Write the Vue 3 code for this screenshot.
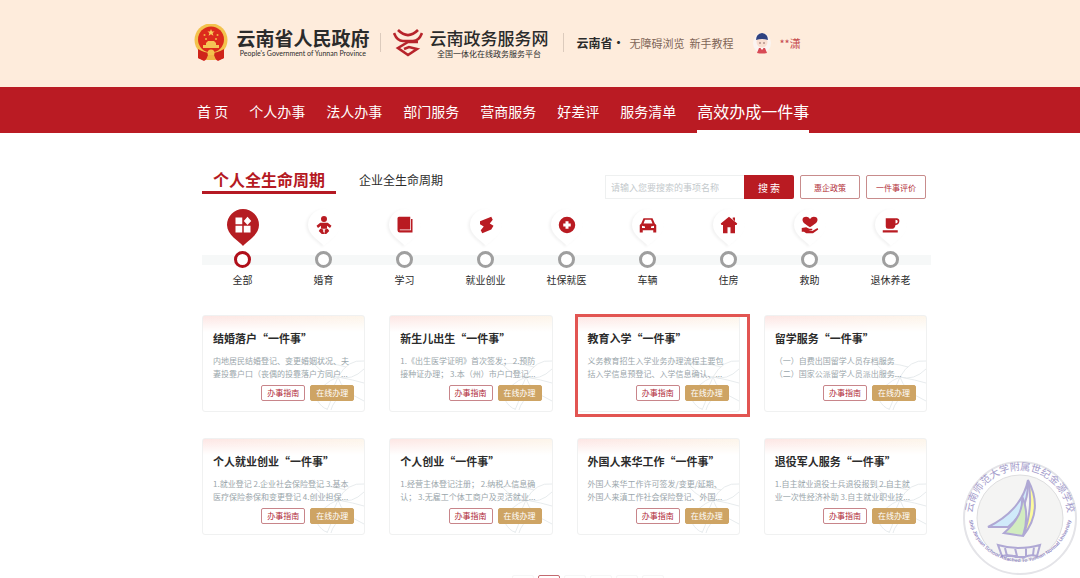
<template>
  <div class="page">
    <header class="header">
      <a class="brand" href="#">
        <svg class="brand__emblem" viewBox="0 0 34 37" aria-hidden="true">
          <path d="M5 25h24l1 9-6 3-3-2h-8l-3 2-6-3z" fill="#d3261c" />
          <circle cx="17" cy="16" r="16.500" fill="#f3c24c" />
          <circle cx="17" cy="15.500" r="13" fill="#dc2a1c" />
          <path d="M17 5l1 2.500h2.600l-2 1.600.8 2.600-2.400-1.500-2.400 1.500.8-2.600-2-1.600H16z" fill="#f8cf5a" />
          <circle cx="10.500" cy="11" r="1" fill="#f4b443" />
          <circle cx="23.500" cy="11" r="1" fill="#f4b443" />
          <circle cx="12" cy="15" r="1" fill="#f4b443" />
          <circle cx="22" cy="15" r="1" fill="#f4b443" />
          <path d="M12 19l2-2h6l2 2v2h3v3H9v-3h3z" fill="#f5c456" />
          <path d="M4 25q13 8 26 0v9l-5 2-3-2H12l-3 2-5-2z" fill="#cf241a" />
          <circle cx="17" cy="29" r="3.500" fill="#f3c24c" />
          <path d="M12 36l2-5h6l2 5z" fill="#f0b544" />
        </svg>
        <span class="brand__text">
          <strong class="brand__name">云南省人民政府</strong>
          <small class="brand__sub">People's Government of Yunnan Province</small>
        </span>
      </a>
      <a class="brand brand--service" href="#">
        <svg class="brand__logo" viewBox="0 0 30 28" fill="none" stroke="#b7242b" stroke-width="2.600" aria-hidden="true">
          <path d="M5 1q10 10 20 0" />
          <path d="M1 4q3 8 9 8h10q6 0 9-8" />
          <path d="M25 13H15L5 19l10 7 9-6-8-2-5 2" />
        </svg>
        <span class="brand__text">
          <strong class="brand__name brand__name--service">云南政务服务网</strong>
          <small class="brand__sub brand__sub--cn">全国一体化在线政务服务平台</small>
        </span>
      </a>
      <div class="tools">
        <strong class="tools__area">云南省·</strong>
        <a href="#">无障碍浏览</a>
        <a href="#">新手教程</a>
      </div>
      <a class="user" href="#">
        <svg class="user__avatar" viewBox="0 0 18 22" aria-hidden="true">
          <ellipse cx="9" cy="11" rx="9" ry="10" fill="#fbf4f1" />
          <path d="M4 21l2-5h6l2 5q-5 1-10 0z" fill="#d84a55" />
          <circle cx="9" cy="10" r="5.500" fill="#f9dfd2" />
          <path d="M3 8q0-6 6-7 6 1 6 7-6-2-12 0z" fill="#2f4280" />
          <circle cx="7" cy="11" r=".7" fill="#644" />
          <circle cx="11" cy="11" r=".7" fill="#644" />
          <path d="M7.500 16L9 18l1.500-2z" fill="#fff" />
        </svg>
        <span>**潇</span>
      </a>
    </header>

    <nav class="nav">
      <a
        v-for="item in navItems"
        :key="item"
        href="#"
        class="nav__link"
        :class="{ 'nav__link--active': item === activeNav }"
      >{{ item }}</a>
    </nav>

    <main class="main">
      <div class="toolbar">
        <div class="tabs">
          <button
            v-for="tab in tabs"
            :key="tab"
            type="button"
            class="tab"
            :class="{ 'tab--active': tab === activeTab }"
            @click="activeTab = tab"
          >{{ tab }}</button>
        </div>
        <form class="search" @submit.prevent>
          <input
            v-model="keyword"
            class="search__input"
            type="text"
            aria-label="搜索事项"
            placeholder="请输入您要搜索的事项名称"
          />
          <button class="search__submit" type="submit">搜 索</button>
        </form>
        <button class="outline-btn" type="button">惠企政策</button>
        <button class="outline-btn" type="button">一件事评价</button>
      </div>

      <div class="steps">
        <button
          v-for="step in steps"
          :key="step.label"
          type="button"
          class="step"
          :class="{ 'step--active': step.label === activeStep }"
          @click="activeStep = step.label"
        >
          <svg class="step__pin" viewBox="0 0 32 38" aria-hidden="true">
            <path class="step__drop" d="M16 37C12 32 0 26 0 16a16 16 0 0 1 32 0c0 10-12 16-16 21z" />
            <svg x="7" y="7" width="18" height="18" viewBox="0 0 24 24">
              <path class="step__icon" fill-rule="evenodd" :d="step.icon" />
            </svg>
          </svg>
          <span class="step__rail"><span class="step__dot"></span></span>
          <span class="step__label">{{ step.label }}</span>
        </button>
      </div>

      <div class="cards">
        <article
          v-for="card in cards"
          :key="card.title"
          class="card"
          :class="{ 'card--marked': card.marked }"
        >
          <svg class="card__flower" viewBox="0 0 52 54" fill="none" stroke="#e1e6e8" stroke-width=".8" aria-hidden="true">
            <path d="M52 4Q36 2 26 20q14 4 26-8M26 20Q14 20 2 7q16-2 32 3M26 20Q10 26 2 42q14 4 24-22M52 26q-10-3-26-6 4 14 26 24M5 43q5 8 10 9M15 53q8-16 2-22M19 53q2-9 13-16" />
          </svg>
          <h3 class="card__title">{{ card.title }}“一件事”</h3>
          <p class="card__desc">{{ card.desc }}</p>
          <div class="card__actions">
            <button type="button" class="card__btn">办事指南</button>
            <button type="button" class="card__btn card__btn--solid">在线办理</button>
          </div>
        </article>
      </div>

      <div class="pager">
        <button
          v-for="n in 6"
          :key="n"
          type="button"
          class="pager__item"
          :class="{ 'pager__item--active': n === 2 }"
          :aria-label="`${n}`"
        ></button>
      </div>
    </main>

    <svg class="seal" viewBox="0 0 116 116" aria-hidden="true">
      <defs>
        <path id="seal-top" d="M12 72A48 48 0 1 1 104 72" />
        <path id="seal-bottom" d="M6 50A52 52 0 1 0 110 50" />
      </defs>
      <circle cx="58" cy="58" r="56" fill="#fff" stroke="#e4e4e8" stroke-width="2" />
      <circle cx="58" cy="58" r="43" fill="#f4f4f3" stroke="#dededf" />
      <path d="M66 20Q60 50 26 67h20Q67 50 66 20z" fill="#d0eafa" stroke="#afa8d4" stroke-width="2" />
      <path d="M60 36Q62 56 42 73l19 3q7-22-1-40z" fill="#d2ecc0" stroke="#afa8d4" stroke-width="2" />
      <path d="M66 20q16 30-5 56Q72 48 66 20z" fill="#fdfb9d" stroke="#afa8d4" stroke-width="2" />
      <path d="M36 85q10 3 20 3 12 0 22-3l-3 11q-7-2-12 1h-9q-6-3-14-1zM43 88l2 8h10l-2-8M64 88v8M72 87l-1 8" fill="none" stroke="#afa8d4" stroke-width="2" />
      <text class="seal__cn"><textPath href="#seal-top" startOffset="50%" text-anchor="middle">云南师范大学附属世纪金源学校</textPath></text>
      <text class="seal__en"><textPath href="#seal-bottom" startOffset="50%" text-anchor="middle">Shiji Jinyuan School Attached To Yunnan Normal University</textPath></text>
    </svg>
  </div>
</template>

<script setup>
import { ref } from 'vue'

const navItems = ['首 页', '个人办事', '法人办事', '部门服务', '营商服务', '好差评', '服务清单', '高效办成一件事']
const activeNav = '高效办成一件事'

const tabs = ['个人全生命周期', '企业全生命周期']
const activeTab = ref(tabs[0])
const activeStep = ref('全部')
const keyword = ref('')

const steps = [
  { label: '全部', icon: 'M2 2h9v9H2zM2 13h9v9H2zM13 13h9v9h-9zM18 1l5 5.500-5 5.500-5-5.500z' },
  { label: '婚育', icon: 'M12 0a4 4 0 1 1 0 8 4 4 0 0 1 0-8zM7 9h10l5 4-2 3-4-3v4H8v-4l-4 3-2-3zM7 17l4 1v3l2 3H9l-4-4zM17 17l-4 1v3l-1 3h3l4-4z' },
  { label: '学习', icon: 'M4 1h15v17H5v1h15V4h2v18H5q-3 0-3-3V3q0-2 2-2z' },
  { label: '就业创业', icon: 'M4 7L19 1l2 4-4 5 5 3-3 5-12 5-2-4 4-5-5-3z' },
  { label: '社保就医', icon: 'M12 1a11 11 0 1 1 0 22 11 11 0 0 1 0-22zM10 7v3H7v4h3v3h4v-3h3v-4h-3V7z' },
  { label: '车辆', icon: 'M6 3h12l3 7 2 2v10h-4v-3H5v3H1V12l2-2zM8 5l-2 5h12l-2-5zM4 13v3h4v-2zM20 13v3h-4v-2z' },
  { label: '住房', icon: 'M12 1l11 9-1 2h-2v11h-6v-8h-4v8H4V12H2l-1-2zM17 2h3v5l-3-3z' },
  { label: '救助', icon: 'M12 15C6 11 2 9 2 5q0-4 5-4 3 0 5 3 2-3 5-3 5 0 5 4c0 4-4 6-10 10zM1 16l6-1 4 2h4v2h-5l5 1 7-4 1 2-7 5H7l-3-2H1z' },
  { label: '退休养老', icon: 'M5 3h15q4 1 3 5-1 4-5 4-1 5-4 5H8q-3 0-3-3zM18 5v5q3 0 3-3 0-2-3-2zM1 19h20v3H1z' },
]

const cards = [
  { title: '结婚落户', desc: '内地居民结婚登记、变更婚姻状况、夫\n妻投靠户口（丧偶的投靠落户方同户...' },
  { title: '新生儿出生', desc: '1.《出生医学证明》首次签发； 2.预防\n接种证办理； 3.本（州）市户口登记...' },
  { title: '教育入学', desc: '义务教育招生入学业务办理流程主要包\n括入学信息预登记、入学信息确认、...', marked: true },
  { title: '留学服务', desc: '（一）自费出国留学人员存档服务\n（二）国家公派留学人员派出服务...' },
  { title: '个人就业创业', desc: '1.就业登记 2.企业社会保险登记 3.基本\n医疗保险参保和变更登记 4.创业担保...' },
  { title: '个人创业', desc: '1.经营主体登记注册； 2.纳税人信息确\n认； 3.无雇工个体工商户及灵活就业...' },
  { title: '外国人来华工作', desc: '外国人来华工作许可签发/变更/延期、\n外国人来滇工作社会保险登记、外国...' },
  { title: '退役军人服务', desc: '1.自主就业退役士兵退役报到 2.自主就\n业一次性经济补助 3.自主就业职业技...' },
]
</script>

<style>
body {
  margin: 0;
  background: #fff;
}
</style>

<style scoped>
.page {
  position: relative;
  height: 100vh;
  overflow: hidden;
  background: #fff;
  color: #2b2b2b;
  font-family: "Noto Sans CJK SC", "Noto Sans", sans-serif;
}

a {
  color: inherit;
  text-decoration: none;
}

button,
input {
  box-sizing: border-box;
  margin: 0;
  padding: 0;
  border: 0;
  background: none;
  color: inherit;
  font-family: inherit;
}

button {
  cursor: pointer;
}

.header {
  display: flex;
  align-items: center;
  box-sizing: border-box;
  height: 87px;
  padding: 0 18% 2px;
  background: #feecdc;
}

.brand {
  display: flex;
  align-items: center;
  gap: 8px;
  padding-right: 11px;
}

.brand--service {
  gap: 6px;
  padding: 0 15px 0 12px;
  border-left: 1px solid #dccbbd;
  border-right: 1px solid #dccbbd;
  border-image: linear-gradient(transparent 20%, #dccbbd 20%, #dccbbd 80%, transparent 80%) 1;
}

.brand__emblem {
  width: 34px;
  height: 37px;
}

.brand__logo {
  width: 30px;
  height: 28px;
}

.brand__text {
  display: flex;
  flex-direction: column;
  align-items: center;
}

.brand__name {
  font-size: 19px;
  line-height: 22px;
  white-space: nowrap;
}

.brand__name--service {
  font-size: 17px;
  font-weight: 500;
}

.brand__sub {
  font-family: Lato, "Liberation Sans", sans-serif;
  font-size: 7px;
  line-height: 9px;
  white-space: nowrap;
}

.brand__sub--cn {
  font-family: inherit;
  font-size: 8px;
}

.tools {
  display: flex;
  gap: 5px;
  padding-left: 12px;
  color: #806557;
  font-size: 11px;
  white-space: nowrap;
}

.tools__area {
  color: #2b2b2b;
  font-size: 12px;
  line-height: 16px;
}

.user {
  display: flex;
  align-items: center;
  gap: 8px;
  margin-left: 20px;
  color: #c4474b;
  font-size: 11px;
}

.user__avatar {
  width: 18px;
  height: 22px;
}

.nav {
  display: flex;
  gap: 21px;
  height: 46px;
  padding: 0 18% 0 197px;
  background: #ba1b23;
  color: #fff;
}

.nav__link {
  box-sizing: border-box;
  padding-top: 3px;
  font-size: 14px;
  line-height: 42px;
  white-space: nowrap;
}

.nav__link--active {
  border-bottom: 3px solid #fff;
  font-size: 16px;
}

.main {
  padding: 34px 149px 0 202px;
}

.toolbar {
  display: flex;
  align-items: flex-end;
  height: 32px;
  padding-right: 5px;
}

.tabs {
  display: flex;
  flex: 1;
  gap: 12px;
  align-self: flex-start;
}

.tab {
  height: 27px;
  padding: 0 11px;
  border-bottom: 3px solid transparent;
  font-size: 12px;
  white-space: nowrap;
}

.tab--active {
  border-color: #b51923;
  color: #b51923;
  font-size: 16px;
  font-weight: 700;
}

.search {
  display: flex;
}

.search__input {
  width: 139px;
  height: 24px;
  padding: 0 5px;
  border: 1px solid #eef0f0;
  border-right: 0;
  font-size: 9px;
}

.search__input::placeholder {
  color: #c3c9cc;
}

.search__submit {
  width: 50px;
  height: 24px;
  border-radius: 0 2px 2px 0;
  background: #b91b22;
  color: #fff;
  font-size: 10px;
}

.outline-btn {
  width: 60px;
  height: 24px;
  margin-left: 6px;
  border: 1px solid #c88c8c;
  border-radius: 2px;
  color: #b3303a;
  font-size: 8px;
}

.steps {
  display: grid;
  grid-template-columns: repeat(9, 1fr);
  margin-top: 10px;
}

.step {
  display: flex;
  flex-direction: column;
  align-items: center;
}

.step__pin {
  width: 32px;
  height: 38px;
  overflow: visible;
}

.step__drop {
  fill: #fff;
  filter: drop-shadow(-2px 1px 1px #f3f3f3);
}

.step__icon {
  fill: #b91b22;
}

.step--active .step__drop {
  fill: #b51d22;
  filter: none;
}

.step--active .step__icon {
  fill: #fff;
}

.step__rail {
  display: flex;
  justify-content: center;
  align-self: stretch;
  margin-top: 4px;
  background: linear-gradient(#f6f8f8, #f6f8f8) center / 100% 10px no-repeat;
}

.step__dot {
  box-sizing: border-box;
  width: 17px;
  height: 17px;
  border: 3px solid #9f9f9f;
  border-radius: 50%;
  background: #fff;
}

.step--active .step__dot {
  border-color: #b00f1a;
}

.step__label {
  margin-top: 5px;
  font-size: 10px;
  line-height: 14px;
}

.cards {
  display: grid;
  grid-template-columns: repeat(4, 1fr);
  gap: 26px 24px;
  margin-top: 28px;
  padding-right: 4px;
}

.card {
  position: relative;
  box-sizing: border-box;
  padding: 14px 10px 10px;
  border: 1px solid #f0f1f1;
  border-radius: 3px;
  background: linear-gradient(to bottom, transparent, #fff 16px), linear-gradient(to right, #fde6e4, #fdf5ea);
}

.card--marked::after {
  content: "";
  position: absolute;
  inset: -2px -11px -6px -3px;
  border: 3px solid #e25552;
}

.card__flower {
  position: absolute;
  right: 0;
  bottom: 0;
  width: 52px;
  height: 54px;
}

.card__title {
  margin: 0;
  font-size: 11px;
  line-height: 16px;
  white-space: nowrap;
}

.card__desc {
  position: relative;
  margin: 8px 0 5px;
  color: #9aa6ab;
  font-size: 8px;
  line-height: 13px;
  white-space: pre;
}

.card__actions {
  position: relative;
  display: flex;
  justify-content: flex-end;
  gap: 5px;
}

.card__btn {
  width: 44px;
  height: 16px;
  border: 1px solid #c8858a;
  border-radius: 2px;
  background: #fff;
  color: #b02a38;
  font-size: 8px;
  line-height: 12px;
}

.card__btn--solid {
  border-color: #cea464;
  background: #cea464;
  color: #fff;
}

.pager {
  display: flex;
  justify-content: center;
  gap: 4px;
  margin-top: 40px;
  padding-left: 42px;
}

.pager__item {
  width: 22px;
  height: 22px;
  border: 1px solid #f6f6f6;
  border-radius: 2px;
}

.pager__item--active {
  border-color: #c46a70;
}

.seal {
  position: absolute;
  right: 2px;
  bottom: 2px;
  width: 116px;
  height: 116px;
}

.seal__cn {
  fill: #a49ccb;
  font-size: 10px;
}

.seal__en {
  fill: #958cc4;
  font-family: "Liberation Sans", Arial, sans-serif;
  font-size: 5px;
  font-weight: 700;
}
</style>
